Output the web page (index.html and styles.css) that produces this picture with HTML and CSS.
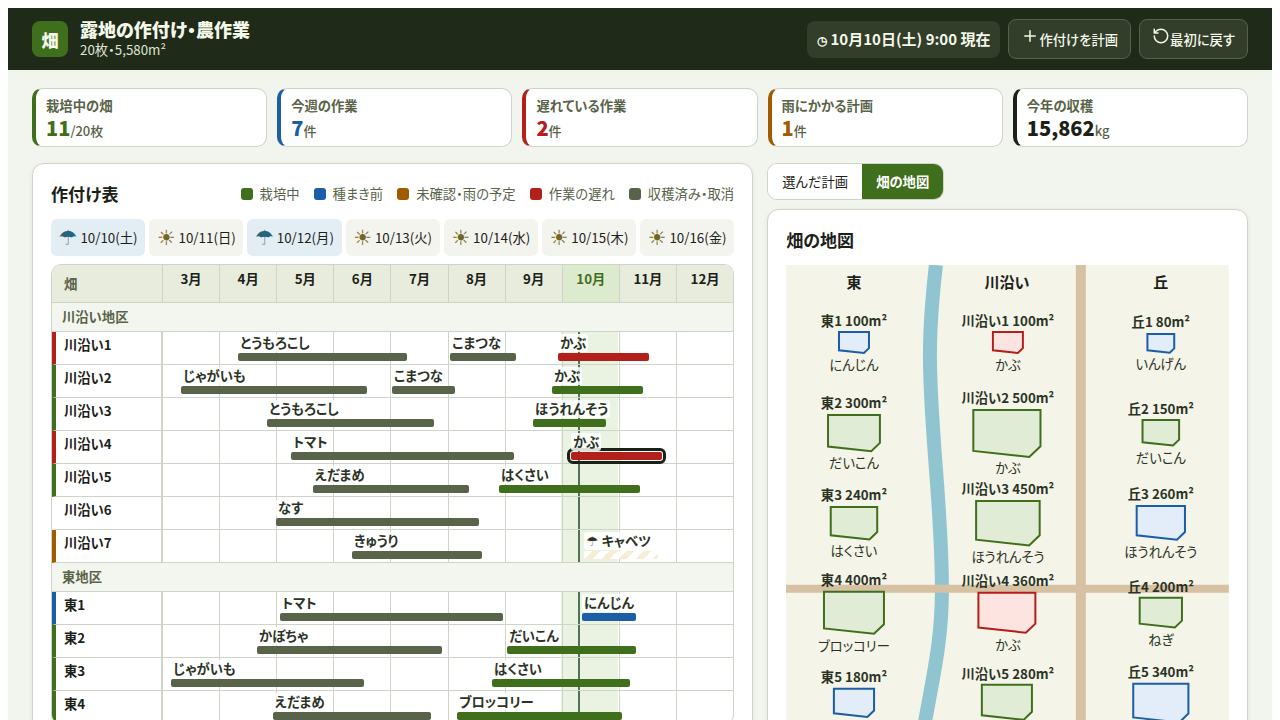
FILE: index.html
```html
<!DOCTYPE html>
<html lang="ja">
<head>
<meta charset="utf-8">
<meta name="viewport" content="width=device-width, initial-scale=1">
<title>露地の作付け・農作業</title>
<link rel="stylesheet" href="styles.css">
</head>
<body>
<div class="app">
  <header class="topbar">
    <div class="logo" aria-hidden="true">畑</div>
    <div class="brand">
      <h1>露地の作付け・農作業</h1>
      <p>20枚・5,580m²</p>
    </div>
    <div class="clock"><span class="clock-icon">◷</span> 10月10日(土) 9:00 現在</div>
    <button class="action" type="button"><svg viewBox="0 0 24 24" aria-hidden="true"><path d="M5 12h14M12 5v14"/></svg>作付けを計画</button>
    <button class="action" type="button"><svg viewBox="0 0 24 24" aria-hidden="true"><path d="M3 12a9 9 0 1 0 9-9 9.75 9.75 0 0 0-6.74 2.74L3 8M3 3v5h5"/></svg>最初に戻す</button>
  </header>

  <section class="stats" aria-label="概況">
    <div class="stat green"><span>栽培中の畑</span><p><b>11</b>/20枚</p></div>
    <div class="stat blue"><span>今週の作業</span><p><b>7</b>件</p></div>
    <div class="stat red"><span>遅れている作業</span><p><b>2</b>件</p></div>
    <div class="stat amber"><span>雨にかかる計画</span><p><b>1</b>件</p></div>
    <div class="stat ink"><span>今年の収穫</span><p><b>15,862</b>kg</p></div>
  </section>

  <main class="columns">
    <section class="panel">
      <div class="panel-head">
        <h2>作付け表</h2>
        <ul class="legend">
          <li class="green">栽培中</li>
          <li class="blue">種まき前</li>
          <li class="amber">未確認・雨の予定</li>
          <li class="red">作業の遅れ</li>
          <li class="gray">収穫済み・取消</li>
        </ul>
      </div>
      <ul class="weather">
        <li class="rain"><i>☂</i>10/10(土)</li>
        <li><i>☀</i>10/11(日)</li>
        <li class="rain"><i>☂</i>10/12(月)</li>
        <li><i>☀</i>10/13(火)</li>
        <li><i>☀</i>10/14(水)</li>
        <li><i>☀</i>10/15(木)</li>
        <li><i>☀</i>10/16(金)</li>
      </ul>
      <table class="plan">
        <colgroup><col class="field-col"><col span="10"></colgroup>
        <thead>
          <tr><th scope="col" class="corner">畑</th><th scope="col">3月</th><th scope="col">4月</th><th scope="col">5月</th><th scope="col">6月</th><th scope="col">7月</th><th scope="col">8月</th><th scope="col">9月</th><th scope="col" class="now">10月</th><th scope="col">11月</th><th scope="col">12月</th></tr>
        </thead>
        <tbody>
          <tr class="area"><th colspan="11" scope="rowgroup">川沿い地区</th></tr>
          <tr><th scope="row" class="red">川沿い1</th><td colspan="10"><div class="lane">
            <button type="button" class="crop gray" style="--s:76;--w:169"><span>とうもろこし</span></button>
            <button type="button" class="crop gray" style="--s:288;--w:66"><span>こまつな</span></button>
            <button type="button" class="crop red" style="--s:396;--w:91"><span>かぶ</span></button></div></td></tr>
          <tr><th scope="row" class="green">川沿い2</th><td colspan="10"><div class="lane">
            <button type="button" class="crop gray" style="--s:19;--w:186"><span>じゃがいも</span></button>
            <button type="button" class="crop gray" style="--s:230;--w:63"><span>こまつな</span></button>
            <button type="button" class="crop green" style="--s:390;--w:91"><span>かぶ</span></button></div></td></tr>
          <tr><th scope="row" class="green">川沿い3</th><td colspan="10"><div class="lane">
            <button type="button" class="crop gray" style="--s:105;--w:167"><span>とうもろこし</span></button>
            <button type="button" class="crop green" style="--s:371;--w:73"><span>ほうれんそう</span></button></div></td></tr>
          <tr><th scope="row" class="red">川沿い4</th><td colspan="10"><div class="lane">
            <button type="button" class="crop gray" style="--s:129;--w:223"><span>トマト</span></button>
            <button type="button" class="crop red selected" aria-pressed="true" style="--s:409;--w:91"><span>かぶ</span></button></div></td></tr>
          <tr><th scope="row" class="green">川沿い5</th><td colspan="10"><div class="lane">
            <button type="button" class="crop gray" style="--s:151;--w:156"><span>えだまめ</span></button>
            <button type="button" class="crop green" style="--s:337;--w:141"><span>はくさい</span></button></div></td></tr>
          <tr><th scope="row">川沿い6</th><td colspan="10"><div class="lane">
            <button type="button" class="crop gray" style="--s:114;--w:203"><span>なす</span></button></div></td></tr>
          <tr><th scope="row" class="amber">川沿い7</th><td colspan="10"><div class="lane">
            <button type="button" class="crop gray" style="--s:190;--w:130"><span>きゅうり</span></button>
            <button type="button" class="crop tentative" style="--s:422;--w:74"><span>☂ キャベツ</span></button></div></td></tr>
          <tr class="area"><th colspan="11" scope="rowgroup">東地区</th></tr>
          <tr><th scope="row" class="blue">東1</th><td colspan="10"><div class="lane">
            <button type="button" class="crop gray" style="--s:118;--w:223"><span>トマト</span></button>
            <button type="button" class="crop blue" style="--s:420;--w:54"><span>にんじん</span></button></div></td></tr>
          <tr><th scope="row" class="green">東2</th><td colspan="10"><div class="lane">
            <button type="button" class="crop gray" style="--s:95;--w:185"><span>かぼちゃ</span></button>
            <button type="button" class="crop green" style="--s:345;--w:129"><span>だいこん</span></button></div></td></tr>
          <tr><th scope="row" class="green">東3</th><td colspan="10"><div class="lane">
            <button type="button" class="crop gray" style="--s:9;--w:193"><span>じゃがいも</span></button>
            <button type="button" class="crop green" style="--s:330;--w:138"><span>はくさい</span></button></div></td></tr>
          <tr><th scope="row" class="green">東4</th><td colspan="10"><div class="lane">
            <button type="button" class="crop gray" style="--s:111;--w:158"><span>えだまめ</span></button>
            <button type="button" class="crop green" style="--s:295;--w:165"><span>ブロッコリー</span></button></div></td></tr>
        </tbody>
      </table>
    </section>

    <div class="side">
      <div class="tabs" role="tablist">
        <button type="button" role="tab" aria-selected="false">選んだ計画</button>
        <button type="button" role="tab" aria-selected="true">畑の地図</button>
      </div>
      <section class="panel map-panel">
        <h2>畑の地図</h2>
        <svg class="map" viewBox="0 0 443 480" role="img" aria-label="畑の地図">
          <defs><path id="plot" d="M-1.5 0H1.5V1.62L1 2.1L-1.5 1.83Z"/></defs>
          <rect class="ground" width="443" height="480"/>
          <path class="river" d="M150 0C146 35 144 62 144 90C144 165 156 240 156 325C156 380 146 415 135 480"/>
          <path class="road minor" d="M0 324H443"/>
          <path class="road" d="M295 0V480"/>
          <g class="zone"><text x="68" y="23">東</text><text x="221" y="23">川沿い</text><text x="375" y="23">丘</text></g>
          <g class="plots blue">
            <use href="#plot" transform="translate(68 67) scale(10)"/>
            <use href="#plot" transform="translate(375 69) scale(8.94)"/>
            <use href="#plot" transform="translate(375 241) scale(16.1)"/>
            <use href="#plot" transform="translate(68 424) scale(13.4)"/>
            <use href="#plot" transform="translate(375 419) scale(18.4)"/>
          </g>
          <g class="plots red">
            <use href="#plot" transform="translate(222 67) scale(10)"/>
            <use href="#plot" transform="translate(221 328) scale(19)"/>
          </g>
          <g class="plots green">
            <use href="#plot" transform="translate(68 150) scale(17.3)"/>
            <use href="#plot" transform="translate(221 145) scale(22.4)"/>
            <use href="#plot" transform="translate(375 155) scale(12.2)"/>
            <use href="#plot" transform="translate(68 242) scale(15.5)"/>
            <use href="#plot" transform="translate(222 236) scale(21.2)"/>
            <use href="#plot" transform="translate(68 327) scale(20)"/>
            <use href="#plot" transform="translate(375 333) scale(14.1)"/>
            <use href="#plot" transform="translate(221 420) scale(16.7)"/>
          </g>
          <g class="plot-name">
            <text x="68" y="61">東1 100m²</text><text x="222" y="61">川沿い1 100m²</text><text x="375" y="62">丘1 80m²</text>
            <text x="68" y="143">東2 300m²</text><text x="222" y="138">川沿い2 500m²</text><text x="375" y="149">丘2 150m²</text>
            <text x="68" y="235">東3 240m²</text><text x="222" y="229">川沿い3 450m²</text><text x="375" y="234">丘3 260m²</text>
            <text x="68" y="320">東4 400m²</text><text x="222" y="321">川沿い4 360m²</text><text x="375" y="327">丘4 200m²</text>
            <text x="68" y="417">東5 180m²</text><text x="222" y="414">川沿い5 280m²</text><text x="375" y="412">丘5 340m²</text>
          </g>
          <g class="plot-crop">
            <text x="68" y="105">にんじん</text><text x="222" y="105">かぶ</text><text x="375" y="104">いんげん</text>
            <text x="68" y="203">だいこん</text><text x="222" y="208">かぶ</text><text x="375" y="198">だいこん</text>
            <text x="68" y="291">はくさい</text><text x="222" y="297">ほうれんそう</text><text x="375" y="292">ほうれんそう</text>
            <text x="68" y="386">ブロッコリー</text><text x="222" y="385">かぶ</text><text x="375" y="380">ねぎ</text>
          </g>
        </svg>
      </section>
    </div>
  </main>
</div>
</body>
</html>
```
FILE: styles.css
```css
:root {
  --green: #3f6f1c;
  --blue: #1c5da8;
  --red: #b3201b;
  --amber: #a05a00;
  --gray: #596349;
  --ink: #1c2118;
  --line: #cfd4c8;
}

* { box-sizing: border-box; }

body {
  background: #fff;
  color: var(--ink);
  font-family: "Noto Sans CJK JP", sans-serif;
  font-size: 16px;
  font-feature-settings: "palt";
}

h1, h2, p, ul { margin: 0; padding: 0; }
ul { list-style: none; }
button { font-family: inherit; font-feature-settings: inherit; color: inherit; cursor: pointer; }

.app { background: #f2f5ed; min-height: 100vh; font-size: smaller; }

.topbar {
  display: flex;
  align-items: center;
  gap: 8px;
  min-height: 62px;
  padding: 0 24px;
  background: #202a18;
  color: #f3f8ea;
}
.logo {
  display: grid;
  place-items: center;
  width: 36px;
  height: 36px;
  margin-right: 4px;
  border-radius: 8px;
  background: var(--green);
  font-size: 17px;
  font-weight: 900;
}
.brand { margin-right: auto; padding-bottom: 2px; }
.brand h1 { font-size: 18px; font-weight: 900; line-height: 24px; }
.brand p { line-height: 18px; color: #dde5d2; }
.clock {
  padding: 0 10px;
  border-radius: 8px;
  background: #323d2a;
  font-size: 15px;
  font-weight: 700;
  line-height: 36px;
}
.clock-icon { font-size: 12px; }
.action {
  height: 40px;
  padding: 0 12px 2px;
  border: 1px solid #56614e;
  border-radius: 8px;
  background: #323d2a;
  font-weight: 500;
}
.action svg {
  width: 18px;
  height: 18px;
  fill: none;
  stroke: currentColor;
  stroke-width: 2;
  stroke-linecap: round;
  stroke-linejoin: round;
}

.stats {
  display: grid;
  grid-template-columns: repeat(5, 1fr);
  gap: 10px;
  padding: 18px 24px 16px;
}
.stat {
  padding: 7px 10px 3px;
  border: 1px solid var(--line);
  border-left: 4px solid;
  border-radius: 10px;
  background: #fff;
}
.stat span { display: block; color: var(--gray); font-weight: 700; line-height: 20px; }
.stat p {
  margin-top: 3px;
  color: var(--gray);
  font-size: 13px;
  font-weight: 500;
  line-height: 24px;
}
.stat b { font-size: 20px; font-weight: 900; line-height: 18px; }
.stat.green { border-left-color: var(--green); }
.stat.blue { border-left-color: var(--blue); }
.stat.red { border-left-color: var(--red); }
.stat.amber { border-left-color: var(--amber); }
.stat.ink { border-left-color: var(--ink); }
.stat.green b { color: var(--green); }
.stat.blue b { color: var(--blue); }
.stat.red b { color: var(--red); }
.stat.amber b { color: var(--amber); }
.stat.ink b { color: var(--ink); }

.columns {
  display: grid;
  grid-template-columns: minmax(0, 3fr) minmax(0, 2fr);
  gap: 14px;
  padding: 0 24px 24px;
}
.panel {
  padding: 18px;
  border: 1px solid var(--line);
  border-radius: 12px;
  background: #fff;
  box-shadow: 0 1px 4px #1c211814;
}
.panel h2 { font-size: 17px; line-height: 24px; }
.panel-head {
  display: flex;
  align-items: center;
  justify-content: space-between;
  margin-bottom: 13px;
}
.legend { display: flex; gap: 14px; color: var(--gray); line-height: 24px; }
.legend li { display: flex; align-items: center; gap: 7px; }
.legend li::before {
  content: "";
  width: 12px;
  height: 12px;
  border-radius: 3px;
  background: var(--c);
}
.legend .green { --c: var(--green); }
.legend .blue { --c: var(--blue); }
.legend .amber { --c: var(--amber); }
.legend .red { --c: var(--red); }
.legend .gray { --c: var(--gray); }

.weather {
  display: grid;
  grid-template-columns: repeat(7, 1fr);
  gap: 4px;
  margin-bottom: 8px;
}
.weather li {
  display: flex;
  align-items: center;
  justify-content: center;
  gap: 3px;
  height: 37px;
  border-radius: 6px;
  background: #f3f4ee;
  white-space: nowrap;
}
.weather i {
  font-family: "DejaVu Sans", sans-serif;
  font-size: 21px;
  font-style: normal;
  line-height: 24px;
  color: #75661f;
}
.weather .rain { background: #e3edf4; }
.weather .rain i { color: #28637f; }

.plan {
  width: 100%;
  table-layout: fixed;
  border: 1px solid var(--line);
  border-radius: 10px;
  border-spacing: 0;
  font-size: inherit;
  overflow: hidden;
}
.field-col { width: 110px; }
.plan th, .plan td { padding: 0; border-bottom: 1px solid var(--line); }
.plan thead th {
  height: 38px;
  padding-top: 4px;
  border-left: 1px solid var(--line);
  background: #e7ecdc;
  line-height: 20px;
  vertical-align: top;
}
.plan thead .corner {
  padding: 0 0 0 12px;
  border-left: 0;
  color: var(--gray);
  text-align: left;
  vertical-align: middle;
}
.plan thead .now { background: #dcebcd; color: var(--green); }
.plan .area th {
  height: 29px;
  padding-left: 10px;
  background: #f3f6ee;
  color: var(--gray);
  line-height: 20px;
  text-align: left;
}
.plan th[scope="row"] {
  padding: 3px 0 0 8px;
  border-left: 4px solid transparent;
  border-right: 1px solid var(--line);
  line-height: 20px;
  text-align: left;
  vertical-align: top;
}
.plan th.green { border-left-color: var(--green); }
.plan th.blue { border-left-color: var(--blue); }
.plan th.red { border-left-color: var(--red); }
.plan th.amber { border-left-color: var(--amber); }

.lane {
  position: relative;
  height: 32px;
  background:
    linear-gradient(#4f7358, #4f7358) 73% 0 / 2px 100% no-repeat,
    repeating-linear-gradient(to right, var(--line) 0 1px, transparent 1px 10%),
    linear-gradient(#eaf3e2, #eaf3e2) 77.7% 0 / 10% 100% no-repeat;
}
.crop {
  position: absolute;
  top: 2px;
  left: calc(var(--s) * 100% / 571);
  display: flex;
  flex-direction: column;
  align-items: flex-start;
  width: calc(var(--w) * 100% / 571);
  padding: 0;
  border: 0;
  background: none;
  font-weight: 700;
  white-space: nowrap;
}
.crop span {
  position: relative;
  z-index: 1;
  padding: 0 2px;
  border-radius: 3px;
  background: #ffffffd9;
  color: #2b3326;
  line-height: 18px;
}
.crop.tentative span { font-family: "Noto Sans", "DejaVu Sans", "Noto Sans CJK JP", sans-serif; }
.crop::after {
  content: "";
  width: 100%;
  height: 8px;
  margin-top: 1px;
  border-radius: 2px;
  background: var(--c);
}
.crop.gray { --c: var(--gray); }
.crop.green { --c: var(--green); }
.crop.blue { --c: var(--blue); }
.crop.red { --c: var(--red); }
.crop.tentative { --c: repeating-linear-gradient(135deg, #fff 0 6px, #f7ecd6 6px 12px); }
.crop.selected::after {
  outline: 3px solid var(--ink);
  outline-offset: 1px;
}

.side { display: flex; flex-direction: column; gap: 9px; }
.tabs {
  display: flex;
  align-self: flex-start;
  border: 1px solid var(--line);
  border-radius: 10px;
  overflow: hidden;
}
.tabs button { height: 35px; padding: 0 14px; border: 0; background: #fff; }
.tabs [aria-selected="true"] { background: var(--green); color: #fff; font-weight: 700; }

.map-panel { flex: 1; }
.map-panel h2 { margin-bottom: 13px; }
.map { display: block; width: 100%; text-anchor: middle; fill: #2b3326; }
.ground { fill: #f4f4e8; }
.river { fill: none; stroke: #90c4d1; stroke-width: 14; }
.road { stroke: #d7c1a3; stroke-width: 10; }
.road.minor { stroke-width: 8; }
.zone { fill: var(--ink); font-size: 15px; font-weight: 700; }
.plots { stroke-width: 2; }
#plot { vector-effect: non-scaling-stroke; }
.plots.blue { fill: #e3ecf9; stroke: var(--blue); }
.plots.red { fill: #fde4e1; stroke: var(--red); }
.plots.green { fill: #e0ecd5; stroke: var(--green); }
.plot-name { font-weight: 700; }
```
